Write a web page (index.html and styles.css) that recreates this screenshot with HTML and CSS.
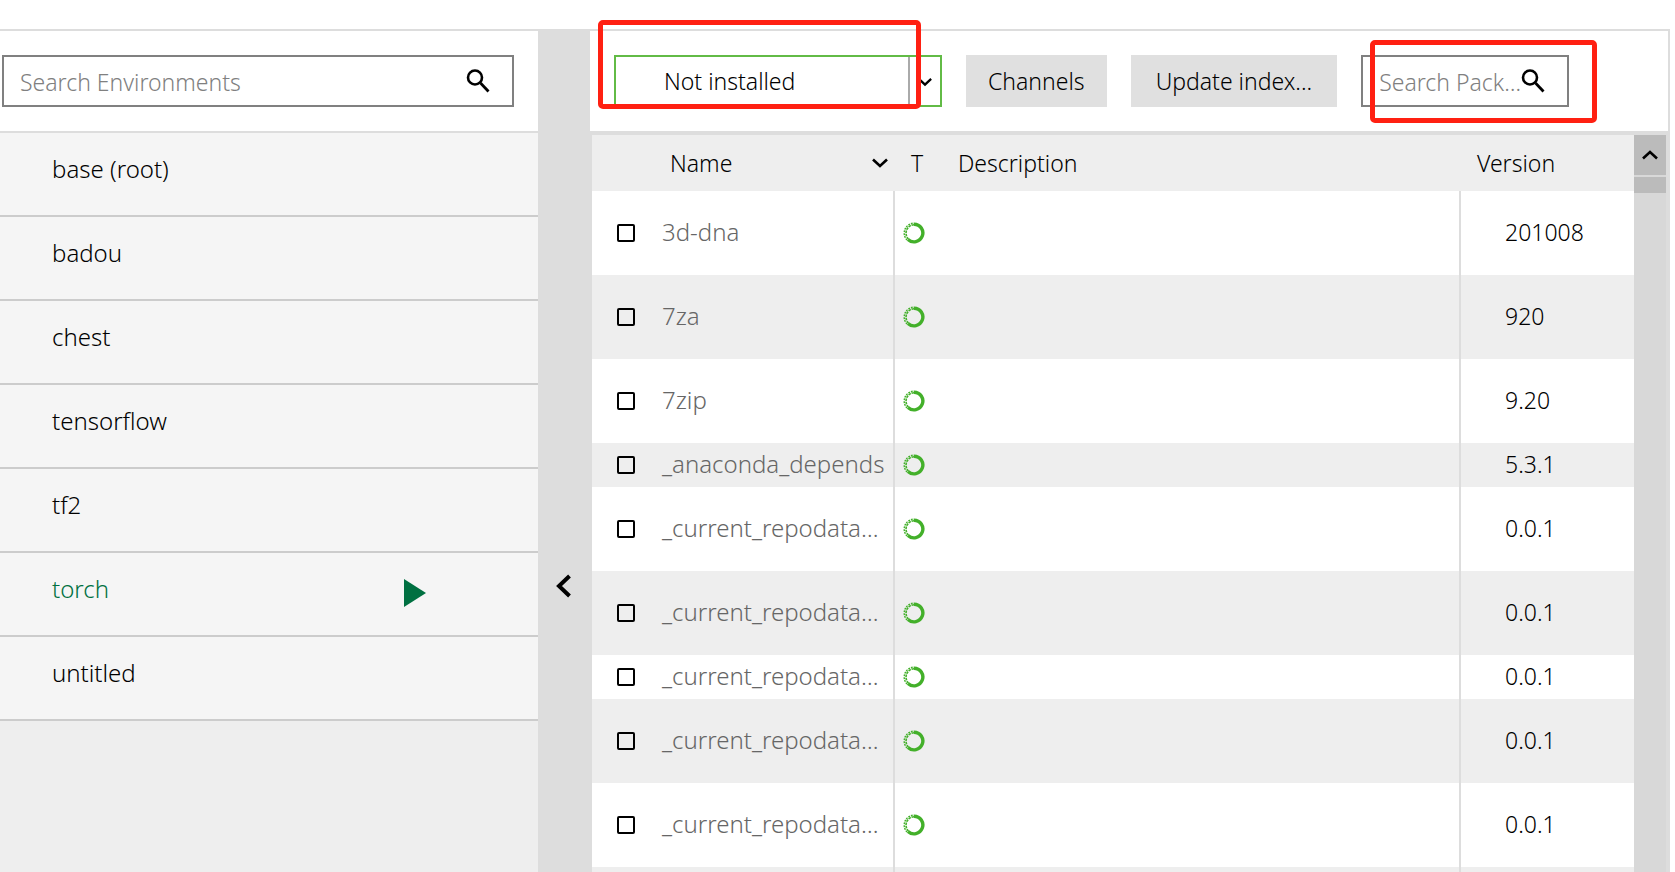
FILE: index.html
```html
<!DOCTYPE html>
<html lang="en">
<head>
<meta charset="utf-8">
<title>Environments</title>
<link rel="stylesheet" href="styles.css">
</head>
<body>
<svg class="sprite" aria-hidden="true">
  <symbol id="search" viewBox="0 0 24 24"><circle cx="9" cy="8.500" r="7" fill="none" stroke="#000" stroke-width="2.600"/><path d="M14.500 14L22.500 22.500" fill="none" stroke="#000" stroke-width="2.800"/></symbol>
  <symbol id="down" viewBox="0 0 16 10"><path d="M1 1.500L8 8L15 1.500" fill="none" stroke="#000" stroke-width="2.600"/></symbol>
  <symbol id="conda" viewBox="0 0 22 22"><path d="M11 2.200A8.800 8.800 0 1 1 5 17.400" fill="none" stroke="#43b02a" stroke-width="3.400"/><path d="M5.500 17A8.300 8.300 0 0 1 11 2.800" fill="none" stroke="#43b02a" stroke-width="1.600" stroke-dasharray="2.500 .8"/><path d="M4 18A9.900 9.900 0 0 1 11 1.200" fill="none" stroke="#43b02a" stroke-width="1.400" stroke-dasharray="1.800 1"/></symbol>
</svg>
<div class="app">
  <aside class="sidebar">
    <div class="sidebar-head">
      <label class="search search-env">
        <input type="text" placeholder="Search Environments" aria-label="Search Environments">
        <svg class="search-icon"><use href="#search"/></svg>
      </label>
    </div>
    <ul class="envs">
      <li><button class="env" type="button">base (root)</button></li>
      <li><button class="env" type="button">badou</button></li>
      <li><button class="env" type="button">chest</button></li>
      <li><button class="env" type="button">tensorflow</button></li>
      <li><button class="env" type="button">tf2</button></li>
      <li class="current"><button class="env" type="button">torch</button><button class="run" type="button" aria-label="Run torch"><svg viewBox="0 0 22 28"><path d="M0 0L22 14L0 28Z" fill="#007041"/></svg></button></li>
      <li><button class="env" type="button">untitled</button></li>
    </ul>
  </aside>
  <button class="collapse" type="button" aria-label="Collapse environments"><svg viewBox="0 0 16 24"><path d="M13.500 2L3 12L13.500 22" fill="none" stroke="#000" stroke-width="4"/></svg></button>
  <main class="main">
    <div class="toolbar">
      <div class="combo">
        <select aria-label="Package filter"><option>Not installed</option></select>
        <svg class="combo-arrow"><use href="#down"/></svg>
        <span class="mark mark-filter"></span>
      </div>
      <button class="btn" type="button">Channels</button>
      <button class="btn btn-wide" type="button">Update index...</button>
      <label class="search search-pkg">
        <input type="text" placeholder="Search Pack…" aria-label="Search Packages">
        <svg class="search-icon"><use href="#search"/></svg>
        <span class="mark mark-search"></span>
      </label>
    </div>
    <div class="packages">
      <div class="table-wrap">
      <table>
        <colgroup><col class="c-check"><col class="c-name"><col class="c-type"><col><col class="c-version"></colgroup>
        <thead><tr><th></th><th class="h-name"><span class="sort">Name<svg><use href="#down"/></svg></span></th><th class="h-type">T</th><th class="h-desc">Description</th><th class="h-version">Version</th></tr></thead>
        <tbody>
          <tr><td class="check"><input type="checkbox" aria-label="3d-dna"></td><td class="name">3d-dna</td><td class="type"><svg><use href="#conda"/></svg></td><td class="desc"></td><td class="version">201008</td></tr>
          <tr><td class="check"><input type="checkbox" aria-label="7za"></td><td class="name">7za</td><td class="type"><svg><use href="#conda"/></svg></td><td class="desc"></td><td class="version">920</td></tr>
          <tr><td class="check"><input type="checkbox" aria-label="7zip"></td><td class="name">7zip</td><td class="type"><svg><use href="#conda"/></svg></td><td class="desc"></td><td class="version">9.20</td></tr>
          <tr class="short"><td class="check"><input type="checkbox" aria-label="_anaconda_depends"></td><td class="name">_anaconda_depends</td><td class="type"><svg><use href="#conda"/></svg></td><td class="desc"></td><td class="version">5.3.1</td></tr>
          <tr><td class="check"><input type="checkbox" aria-label="_current_repodata"></td><td class="name">_current_repodata…</td><td class="type"><svg><use href="#conda"/></svg></td><td class="desc"></td><td class="version">0.0.1</td></tr>
          <tr><td class="check"><input type="checkbox" aria-label="_current_repodata"></td><td class="name">_current_repodata…</td><td class="type"><svg><use href="#conda"/></svg></td><td class="desc"></td><td class="version">0.0.1</td></tr>
          <tr class="short"><td class="check"><input type="checkbox" aria-label="_current_repodata"></td><td class="name">_current_repodata…</td><td class="type"><svg><use href="#conda"/></svg></td><td class="desc"></td><td class="version">0.0.1</td></tr>
          <tr><td class="check"><input type="checkbox" aria-label="_current_repodata"></td><td class="name">_current_repodata…</td><td class="type"><svg><use href="#conda"/></svg></td><td class="desc"></td><td class="version">0.0.1</td></tr>
          <tr><td class="check"><input type="checkbox" aria-label="_current_repodata"></td><td class="name">_current_repodata…</td><td class="type"><svg><use href="#conda"/></svg></td><td class="desc"></td><td class="version">0.0.1</td></tr>
          <tr><td class="check"></td><td class="name"></td><td class="type"></td><td class="desc"></td><td class="version"></td></tr>
        </tbody>
      </table>
      </div>
      <div class="scrollbar">
        <button class="scroll-up" type="button" aria-label="Scroll up"><svg><use href="#down"/></svg></button>
        <div class="scroll-thumb"></div>
      </div>
    </div>
  </main>
</div>
</body>
</html>
```
FILE: styles.css
```css
* { box-sizing: border-box; }

body {
  margin: 0;
  background: #fff;
  color: #000;
  overflow: hidden;
}

body, input, select, button {
  font-family: "Noto Sans", "Open Sans", sans-serif;
  font-size: 23px;
  font-weight: 300;
  line-height: 32px;
}

button, select {
  color: #000;
  border: 0;
  border-radius: 0;
  background: none;
  padding: 0;
}

svg { display: block; }
.sprite { position: absolute; width: 0; height: 0; }

.app {
  display: flex;
  height: 100vh;
  padding: 29px 5px 0 0;
}

.sidebar {
  flex: 0 0 538px;
  border-top: 2px solid #ddd;
  background: #eee;
}

.sidebar-head {
  padding: 24px 24px 24px 2px;
  background: #fff;
  border-bottom: 2px solid #ddd;
}

.search {
  position: relative;
  display: flex;
  align-items: center;
  height: 52px;
  padding: 0 22px 0 16px;
  border: 2px solid #808080;
  background: #fff;
}

.search input {
  flex: 1;
  min-width: 0;
  border: 0;
  padding: 2px 0 0;
  outline: 0;
  background: transparent;
}

.search input::placeholder { color: #808080; opacity: 1; }
.search-icon { width: 24px; height: 24px; flex: none; }

.envs { list-style: none; margin: 0; padding: 0; }

.envs li {
  display: flex;
  align-items: center;
  height: 84px;
  padding: 0 112px 10px 52px;
  background: #f5f5f5;
  border-bottom: 2px solid #ccc;
}

.env { flex: 1; text-align: left; font-size: 24px; }
.current .env { color: #007041; }
.run { padding-top: 8px; }
.run svg { width: 22px; height: 28px; }

.collapse {
  flex: 0 0 52px;
  display: flex;
  align-items: flex-start;
  justify-content: center;
  padding-top: 545px;
  background: #ddd;
}
.collapse svg { width: 16px; height: 24px; }

.main {
  flex: 1;
  min-width: 0;
  display: flex;
  flex-direction: column;
  border: 2px solid #ddd;
  border-width: 2px 2px 0 0;
}

.toolbar {
  display: flex;
  align-items: center;
  gap: 24px;
  padding: 24px;
  background: #fff;
}

.combo { position: relative; width: 328px; height: 52px; }

.combo select {
  appearance: none;
  width: 100%;
  height: 100%;
  padding-left: 48px;
  background: linear-gradient(#aaa, #aaa) no-repeat right 30px top 0 / 2px 100%;
  border: 2px solid #62bb46;
}

.combo-arrow {
  position: absolute;
  top: 22px;
  right: 10px;
  width: 14px;
  height: 10px;
  pointer-events: none;
}

.mark {
  position: absolute;
  border: 5px solid #ff2012;
  border-radius: 5px;
  pointer-events: none;
}
.mark-filter { left: -16px; top: -35px; width: 323px; height: 89px; }
.mark-search { left: 7px; top: -17px; width: 227px; height: 83px; }

.btn { height: 52px; padding: 0 22px; background: #e0e0e0; white-space: nowrap; }
.btn-wide { padding: 0 25px; }

.search-pkg { width: 208px; }
.search-pkg input { margin-right: -16px; }

.packages {
  flex: 1;
  min-height: 0;
  display: flex;
  border: 2px solid #ddd;
  border-width: 4px 2px 0 2px;
}

.table-wrap { flex: 1; min-width: 0; overflow: hidden; }

table { width: 100%; table-layout: fixed; border-collapse: separate; border-spacing: 0; }
.c-check { width: 70px; }
.c-name { width: 233px; }
.c-type { width: 50px; }
.c-version { width: 173px; }

th, td { padding: 0; text-align: left; font-weight: 300; white-space: nowrap; }
th { height: 56px; background: #eee; }
td { height: 84px; }
.short td { height: 44px; }
tbody tr:nth-child(even) { background: #eee; }

.h-name { padding: 0 7px 0 8px; }
.sort { display: flex; justify-content: space-between; align-items: center; }
.sort svg { width: 16px; height: 10px; }
.h-type { padding-left: 16px; }
.h-desc { padding-left: 13px; }
.h-version { padding-left: 16px; }

.check { padding-left: 25px; }
.check input {
  appearance: none;
  display: block;
  width: 18px;
  height: 18px;
  margin: 0;
  border: 2px solid #000;
  border-radius: 2px;
}
.name { font-size: 24px; color: #666; border-right: 2px solid #ddd; padding-bottom: 2px; }
.type { padding-left: 8px; }
.type svg { width: 22px; height: 22px; }
.desc { border-right: 2px solid #ddd; }
.version { padding: 0 0 2px 44px; }

.scrollbar { flex: 0 0 32px; background: #d8d8d8; }
.scroll-up {
  display: flex;
  align-items: center;
  justify-content: center;
  width: 32px;
  height: 40px;
  background: #bbb;
}
.scroll-up svg { width: 16px; height: 10px; transform: rotate(180deg); }
.scroll-thumb { height: 16px; margin-top: 2px; background: #bbb; }
```
